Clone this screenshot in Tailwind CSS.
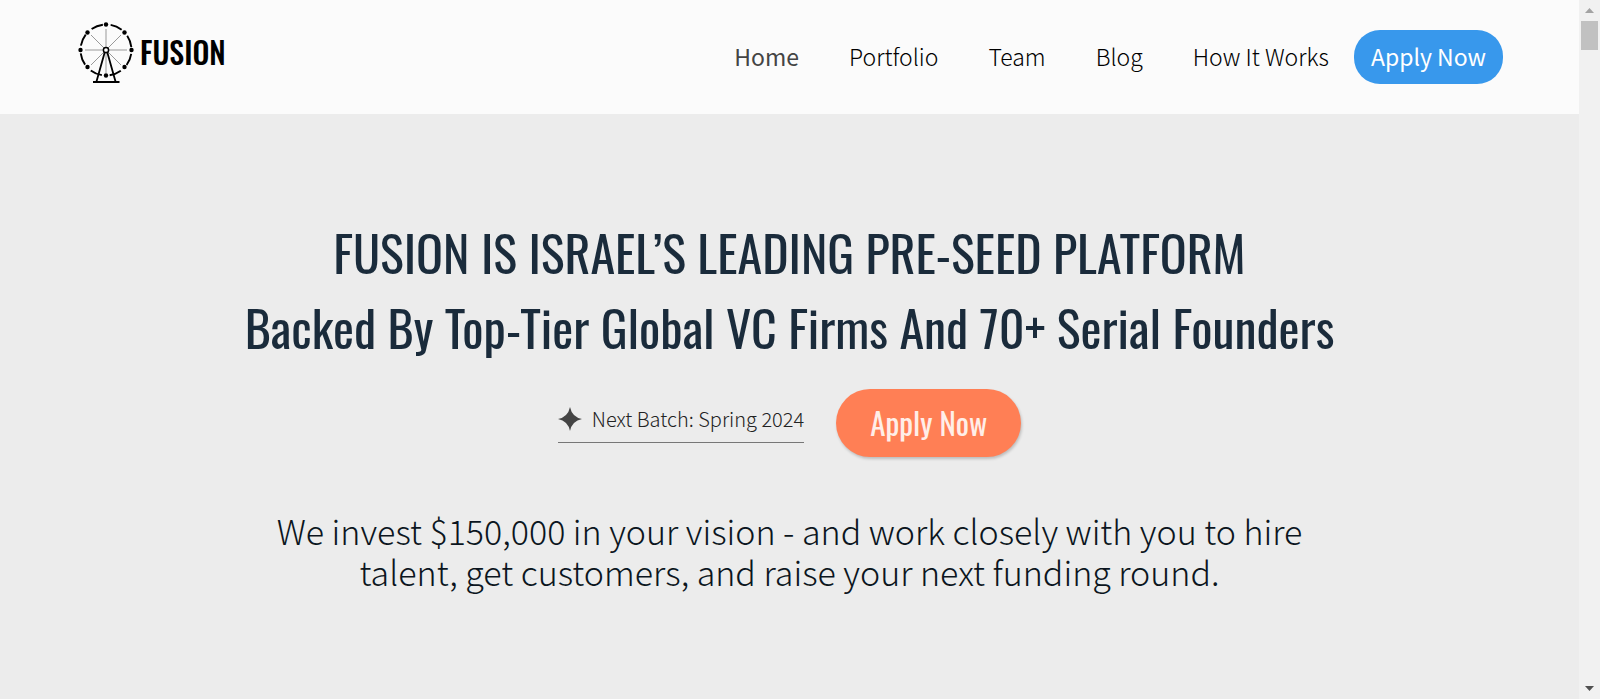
<!DOCTYPE html>
<html lang="en">
<head>
  <meta charset="UTF-8" />
  <meta name="viewport" content="width=device-width, initial-scale=1.0" />
  <title>Fusion</title>
  <script src="https://cdn.jsdelivr.net/npm/@tailwindcss/browser@4"></script>
</head>
<body class="flex min-h-screen bg-[#ececec] font-['Source_Sans_Pro','Noto_Sans_CJK_JP',sans-serif] font-light text-black">

  <div class="flex flex-1 flex-col">
    <!-- Header -->
    <header class="flex h-[114px] items-center justify-between bg-[#fbfbfb] px-19">
      <a href="#" class="flex items-center gap-1 pb-[10px]" aria-label="Fusion home">
        <svg class="h-16 w-15" viewBox="0 0 60 64" fill="none" stroke="#000">
          <g stroke="#999" stroke-width="1">
            <path d="M30 9v18M30 33v20M9 30h18M33 30h18M15 15l13 13M32 32l13 13M45 15L32 28M28 32L15 45" />
          </g>
          <circle cx="30" cy="30" r="25.5" stroke-width="1.9" stroke-dasharray="12 8.03" stroke-dashoffset="-4" />
          <g fill="#000" stroke="none">
            <circle cx="30" cy="4.5" r="2.2" />
            <circle cx="48.5" cy="12.5" r="2.2" />
            <circle cx="55.5" cy="30" r="2.2" />
            <circle cx="48.5" cy="47" r="2.2" />
            <circle cx="30" cy="55.5" r="2.2" />
            <circle cx="11.5" cy="47" r="2.2" />
            <circle cx="4.5" cy="30" r="2.2" />
            <circle cx="11.5" cy="12.5" r="2.2" />
          </g>
          <path d="M28.8 32L20.5 61.5M31.2 32L39.5 61.5" stroke-width="1.8" />
          <path d="M17 62h26.500" stroke-width="2" />
          <circle cx="30" cy="30" r="2.6" fill="#fff" stroke-width="1.5" />
        </svg>
        <span class="font-['Oswald',sans-serif] text-[30px] leading-10 font-medium">FUSION</span>
      </a>

      <nav class="flex items-center whitespace-nowrap text-[23px] leading-8">
        <a href="#" class="px-[25px] pt-[10px] pb-3 font-normal text-[#444]">Home</a>
        <a href="#" class="px-[25px] pt-[10px] pb-3">Portfolio</a>
        <a href="#" class="px-[25px] pt-[10px] pb-3">Team</a>
        <a href="#" class="px-[25px] pt-[10px] pb-3">Blog</a>
        <a href="#" class="px-[25px] pt-[10px] pb-3">How It Works</a>
        <a href="#" class="rounded-[26px] bg-[#3898ec] px-[17px] pt-[10px] pb-3 font-normal text-white">Apply Now</a>
      </nav>
    </header>

    <!-- Hero -->
    <main class="flex flex-col items-center px-6 pt-[100px] text-center">
      <h1 class="font-['Oswald',sans-serif] text-[50px] leading-[75px] font-normal text-[#1a2b3b]">
        FUSION IS ISRAEL’S LEADING PRE-SEED PLATFORM<br />
        Backed By Top-Tier Global VC Firms And 70+ Serial Founders
      </h1>

      <div class="mt-[25px] flex items-center gap-8">
        <div class="flex items-center gap-[10px] border-b border-[#777] pb-2 text-[20px] leading-[30px] text-[#222]">
          <svg class="size-6" viewBox="0 0 24 24" fill="#444">
            <path d="M12 0Q14 10 24 12Q14 14 12 24Q10 14 0 12Q10 10 12 0z" />
          </svg>
          <span>Next Batch: Spring 2024</span>
        </div>
        <button type="button" class="rounded-full bg-[#ff7f55] px-[34px] pt-[15px] pb-[17px] font-['Oswald',sans-serif] text-[31px] leading-9 font-normal text-[#ffeee8] shadow-[1px_2px_3px_rgba(0,0,0,0.2)]">Apply Now</button>
      </div>

      <p class="mt-[53px] max-w-[1060px] text-[34px] leading-[41px] text-[#0b1520]">
        We invest $150,000 in your vision - and work closely with you to hire talent, get customers, and raise your next funding round.
      </p>
    </main>
  </div>

  <!-- Scrollbar -->
  <div class="flex w-[21px] flex-col items-center justify-between bg-[#f1f1f1] py-2" aria-hidden="true">
    <div class="flex w-full flex-col items-center gap-2">
      <svg class="h-[5px] w-[9px]" viewBox="0 0 9 5" fill="#a3a3a3"><path d="M4.500 0L9 5H0z" /></svg>
      <div class="h-[29px] w-[17px] bg-[#c1c1c1]"></div>
    </div>
    <svg class="h-[5px] w-[9px]" viewBox="0 0 9 5" fill="#505050"><path d="M4.500 5L9 0H0z" /></svg>
  </div>

</body>
</html>
